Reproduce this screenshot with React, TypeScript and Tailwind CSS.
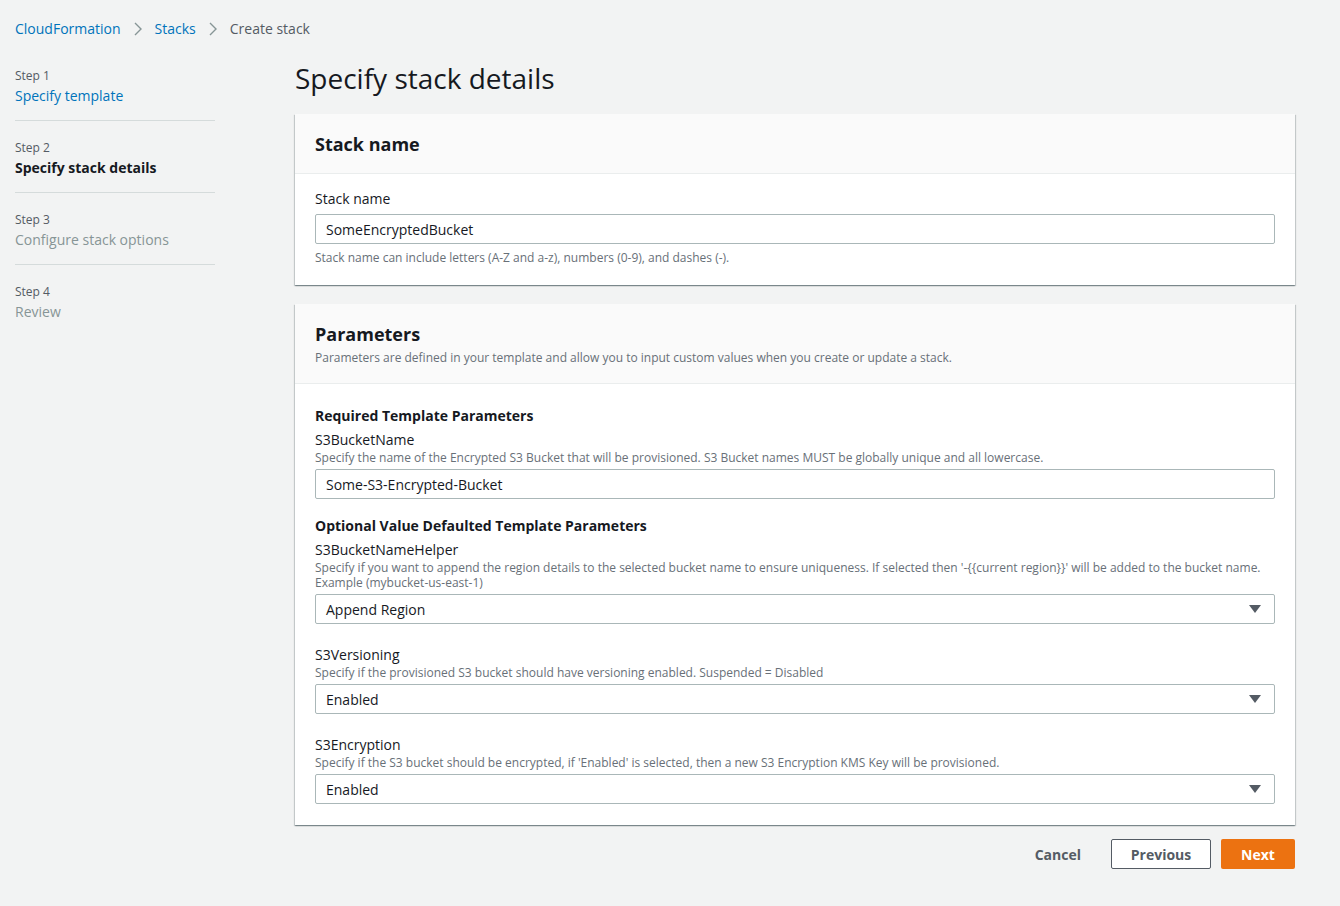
import React from "react";

const font = { fontFamily: '"Open Sans", "Noto Sans", Arial, sans-serif' };

const steps = [
  { step: "Step 1", label: "Specify template", state: "link" },
  { step: "Step 2", label: "Specify stack details", state: "active" },
  { step: "Step 3", label: "Configure stack options", state: "disabled" },
  { step: "Step 4", label: "Review", state: "disabled" },
];

const Chevron = () => (
  <svg width="10" height="16" viewBox="0 0 10 16" className="mx-3">
    <path d="M2 2l6 6-6 6" fill="none" stroke="#879596" strokeWidth="1.4" />
  </svg>
);

const Caret = () => (
  <svg width="12" height="8" viewBox="0 0 12 8">
    <path d="M0 0h12L6 8z" fill="#545b64" />
  </svg>
);

const Panel: React.FC<{ header: React.ReactNode; children: React.ReactNode }> = ({ header, children }) => (
  <div className="bg-white shadow-[0_1px_1px_0_rgba(0,28,36,0.3),1px_1px_1px_0_rgba(0,28,36,0.15),-1px_1px_1px_0_rgba(0,28,36,0.15)]">
    <div className="bg-[#fafafa] border-b border-[#eaeded] px-5">{header}</div>
    <div className="px-5">{children}</div>
  </div>
);

const TextInput: React.FC<{ value: string }> = ({ value }) => (
  <div className="h-[30px] border border-[#aab7b8] rounded-[2px] bg-white flex items-center px-[10px] text-[14px] text-[#16191f]">
    {value}
  </div>
);

const Select: React.FC<{ value: string }> = ({ value }) => (
  <div className="h-[30px] border border-[#aab7b8] rounded-[2px] bg-white flex items-center justify-between pl-[10px] pr-[13px] text-[14px] text-[#16191f]">
    <span>{value}</span>
    <Caret />
  </div>
);

const Field: React.FC<{ label: string; desc: React.ReactNode; children: React.ReactNode; className?: string }> = ({
  label,
  desc,
  children,
  className,
}) => (
  <div className={className}>
    <div className="text-[14px] leading-[22px] text-[#16191f]">{label}</div>
    <div className="text-[12px] leading-[15px] text-[#687078] mt-[-1px] mb-[4px]">{desc}</div>
    {children}
  </div>
);

export default function App() {
  return (
    <div className="min-h-[906px] bg-[#f2f3f3] text-[#16191f]" style={font}>
      <div className="flex items-center px-[15px] pt-[18px] text-[14px] leading-[22px]">
        <span className="text-[#0073bb]">CloudFormation</span>
        <Chevron />
        <span className="text-[#0073bb]">Stacks</span>
        <Chevron />
        <span className="text-[#545b64]">Create stack</span>
      </div>

      <div className="flex pl-[15px] pt-[19px]">
        <nav className="w-[200px] shrink-0 pt-[8px]">
          {steps.map((s, i) => (
            <div
              key={s.step}
              className={i < steps.length - 1 ? "border-b border-[#d5dbdb] pb-[14px] mb-[18px]" : ""}
            >
              <div className="text-[12px] leading-[18px] text-[#545b64]">{s.step}</div>
              <div
                className={
                  "text-[14px] leading-[21px] " +
                  (s.state === "link"
                    ? "text-[#0073bb]"
                    : s.state === "active"
                    ? "font-bold text-[#16191f]"
                    : "text-[#879596]")
                }
              >
                {s.label}
              </div>
            </div>
          ))}
        </nav>

        <main className="ml-[80px] w-[1000px]">
          <h1 className="text-[28px] leading-[36px] text-[#16191f] mt-[1px] mb-[18px]">Specify stack details</h1>

          <Panel
            header={
              <div className="h-[59px] flex items-center">
                <h2 className="text-[18px] font-bold leading-[22px]">Stack name</h2>
              </div>
            }
          >
            <div className="pt-[14px] pb-[20px]">
              <div className="text-[14px] leading-[22px] mb-[4px]">Stack name</div>
              <TextInput value="SomeEncryptedBucket" />
              <div className="text-[12px] leading-[15px] text-[#687078] mt-[6px]">
                Stack name can include letters (A-Z and a-z), numbers (0-9), and dashes (-).
              </div>
            </div>
          </Panel>

          <div className="h-[19px]" />

          <Panel
            header={
              <div className="pt-[19px] pb-[17px]">
                <h2 className="text-[18px] font-bold leading-[22px]">Parameters</h2>
                <div className="text-[12px] leading-[16px] text-[#687078] mt-[5px]">
                  Parameters are defined in your template and allow you to input custom values when you create or update a stack.
                </div>
              </div>
            }
          >
            <div className="pt-[21px] pb-[21px]">
              <div className="text-[14px] font-bold leading-[22px]">Required Template Parameters</div>
              <Field
                className="mt-[2px]"
                label="S3BucketName"
                desc="Specify the name of the Encrypted S3 Bucket that will be provisioned. S3 Bucket names MUST be globally unique and all lowercase."
              >
                <TextInput value="Some-S3-Encrypted-Bucket" />
              </Field>

              <div className="text-[14px] font-bold leading-[22px] mt-[16px]">Optional Value Defaulted Template Parameters</div>
              <Field
                className="mt-[2px]"
                label="S3BucketNameHelper"
                desc={
                  <>
                    Specify if you want to append the region details to the selected bucket name to ensure uniqueness. If selected then '-{"{{"}current region{"}}"}' will be added to the bucket name.
                    <br />
                    Example (mybucket-us-east-1)
                  </>
                }
              >
                <Select value="Append Region" />
              </Field>

              <Field
                className="mt-[20px]"
                label="S3Versioning"
                desc="Specify if the provisioned S3 bucket should have versioning enabled. Suspended = Disabled"
              >
                <Select value="Enabled" />
              </Field>

              <Field
                className="mt-[20px]"
                label="S3Encryption"
                desc="Specify if the S3 bucket should be encrypted, if 'Enabled' is selected, then a new S3 Encryption KMS Key will be provisioned."
              >
                <Select value="Enabled" />
              </Field>
            </div>
          </Panel>

          <div className="flex justify-end items-center mt-[14px] text-[14px] font-bold">
            <button className="px-5 h-[30px] text-[#545b64]">Cancel</button>
            <button className="ml-[10px] w-[100px] h-[30px] border border-[#545b64] rounded-[2px] bg-white text-[#545b64]">
              Previous
            </button>
            <button className="ml-[10px] w-[74px] h-[30px] rounded-[2px] bg-[#ec7211] text-white">Next</button>
          </div>
        </main>
      </div>
    </div>
  );
}
